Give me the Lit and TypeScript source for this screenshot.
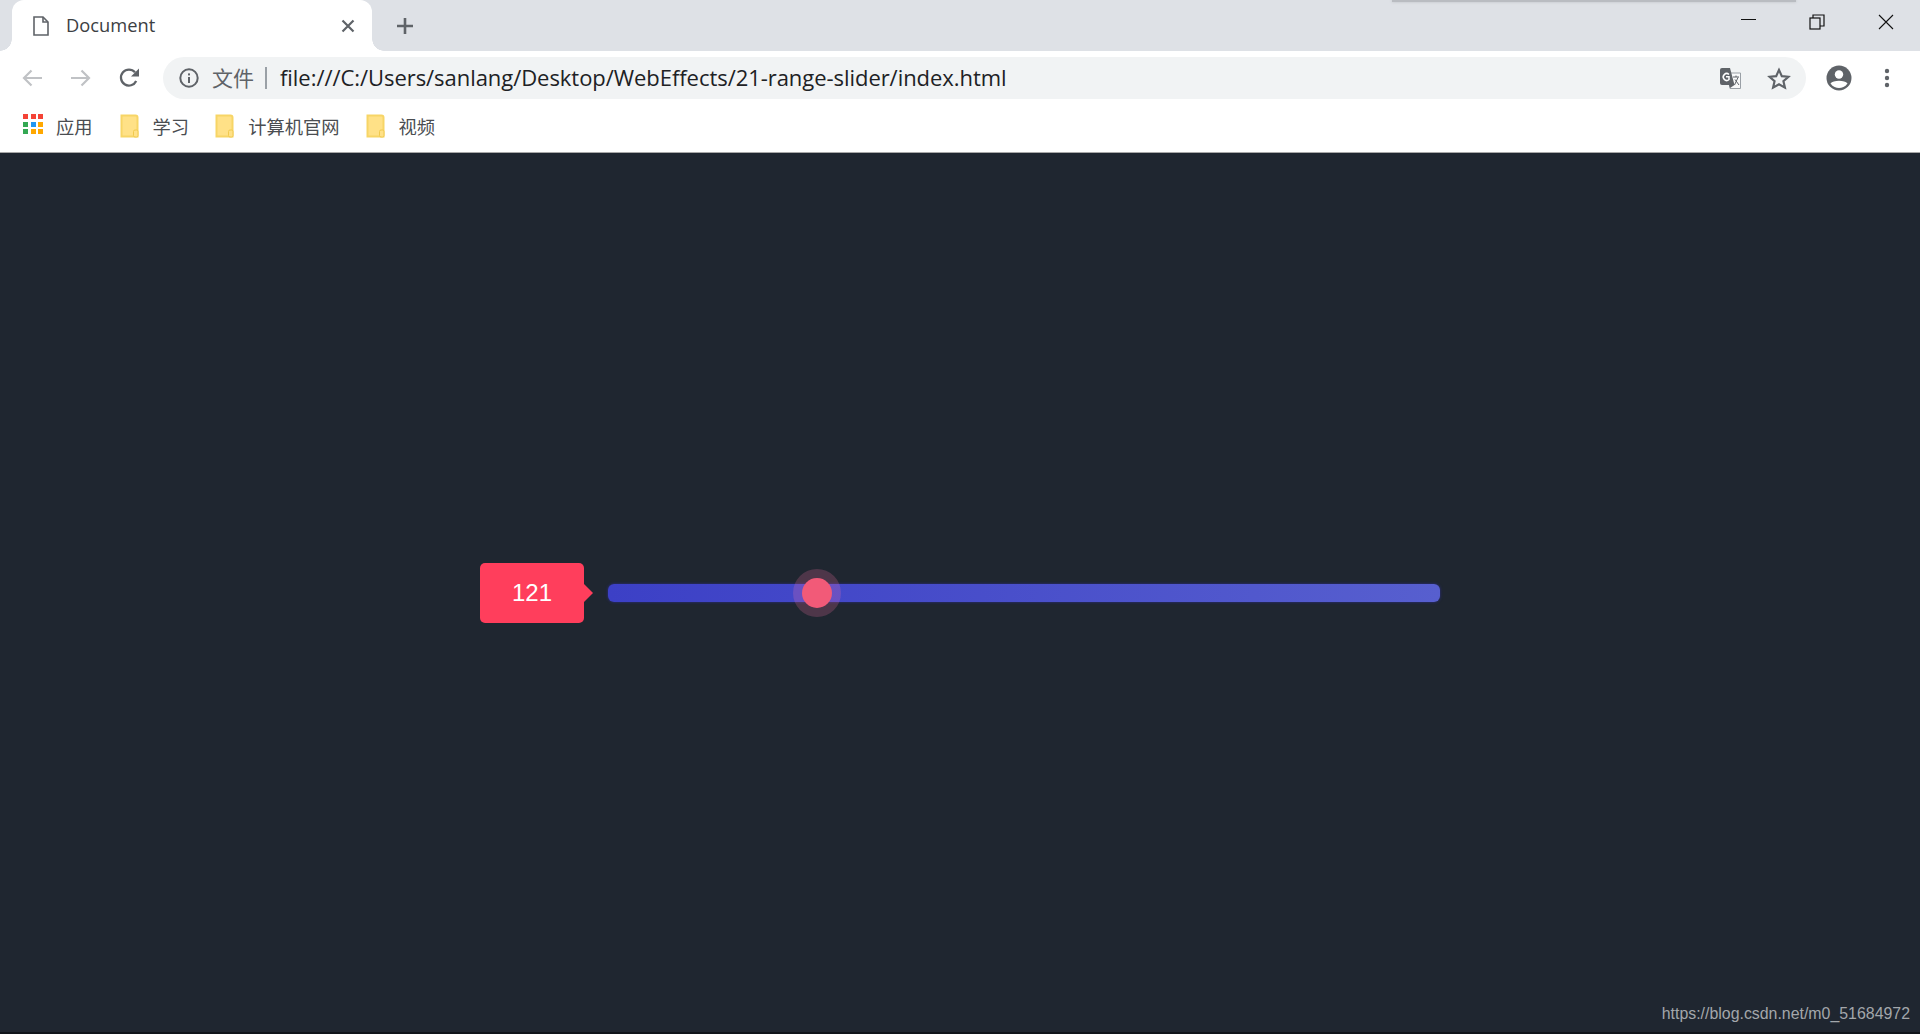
import { LitElement, html, css, svg } from "lit";
import { customElement } from "lit/decorators.js";

const folder = svg`<svg class="folder" width="19" height="24" viewBox="0 0 19 24"><path d="M1.5 1.5H15.5a2 2 0 0 1 2 2V22.5H1.5Z" fill="#ffe187" stroke="#f7d566" stroke-width="2"/><rect x="13.5" y="16" width="4.5" height="7" rx="1.5" fill="#ffe187" stroke="#f0c94e" stroke-width="1"/></svg>`;

const appColors = ["#f44336", "#f44336", "#f44336", "#34a853", "#2196f3", "#ffa800", "#34a853", "#ffa800", "#ffa800"];

@customElement("app-root")
export class AppRoot extends LitElement {
  static styles = css`
    :host {
      display: flex;
      flex-direction: column;
      height: 1034px;
      overflow: hidden;
      position: relative;
      font-family: "Noto Sans", "Noto Sans CJK SC", sans-serif;
      background: #1f2630;
    }
    .shadow-sliver {
      position: absolute;
      top: 0;
      left: 1392px;
      width: 404px;
      height: 2px;
      background: #b9bcc1;
      box-shadow: 0 0 3px #b9bcc1;
    }
    .tabstrip {
      height: 51px;
      flex: none;
      background: #dee1e6;
      display: flex;
      align-items: stretch;
      padding-left: 12px;
    }
    .tab {
      position: relative;
      width: 360px;
      background: #fff;
      border-radius: 12px 12px 0 0;
      display: flex;
      align-items: center;
      padding: 0 16px 0 21px;
      box-sizing: border-box;
      color: #3c4043;
    }
    .tab::before,
    .tab::after {
      content: "";
      position: absolute;
      bottom: 0;
      width: 12px;
      height: 12px;
    }
    .tab::before {
      left: -12px;
      background: radial-gradient(circle at 0 0, transparent 11.5px, #fff 12px);
    }
    .tab::after {
      right: -12px;
      background: radial-gradient(circle at 100% 0, transparent 11.5px, #fff 12px);
    }
    .tab .doc { margin-right: 17px; }
    .tab .title { flex: 1; line-height: 51px; font-family: "Open Sans", sans-serif; font-size: 18.3px; position: relative; top: -1px; }
    .newtab { margin-left: 22px; align-self: center; display: flex; }
    .winctl { margin-left: auto; display: flex; align-items: center; }
    .winctl svg { display: block; }
    .toolbar {
      height: 48px;
      flex: none;
      background: #fff;
      display: flex;
      align-items: flex-end;
      padding: 0 0 0 22px;
    }
    .nav { display: flex; align-items: center; height: 42px; }
    .omnibox {
      margin-left: 23px;
      width: 1643px;
      height: 42px;
      background: #f1f3f4;
      border-radius: 21px;
      display: flex;
      align-items: center;
      padding: 0 16px 0 13px;
      box-sizing: border-box;
    }
    .scheme { font-size: 21px; color: #5f6368; margin-left: 13px; font-family: "Noto Sans CJK SC", sans-serif; position: relative; top: -1px; }
    .sep { width: 2px; height: 22px; background: #9aa0a6; margin: 0 13px 0 11px; }
    .url { font-size: 22px; color: #202124; flex: 1; font-family: "Open Sans", sans-serif; white-space: nowrap; letter-spacing: -0.05px; position: relative; top: -1px; }
    .omni-right { display: flex; align-items: center; gap: 27px; }
    .tool-right { display: flex; align-items: center; height: 42px; margin-left: 20px; gap: 32px; }
    .bookmarks {
      height: 54px;
      flex: none;
      box-sizing: border-box;
      background: #fff;
      border-bottom: 1px solid #a8a8a8;
      display: flex;
      align-items: center;
      padding-left: 23px;
      font-family: "Noto Sans CJK SC", sans-serif;
      font-size: 18.3px;
      color: #4a4d51;
    }
    .bm { display: flex; align-items: center; }
    .bm span { margin-left: 13px; }
    .bm.apps { margin-right: 27px; }
    .bm.f { margin-right: 26px; }
    .bm.f span { margin-left: 14px; }
    .grid { display: grid; grid-template-columns: repeat(3, 5px); grid-auto-rows: 5px; gap: 2.5px; margin-top: -3px; }
    .grid i { display: block; }
    .stage {
      flex: 1;
      position: relative;
      display: flex;
      align-items: center;
      justify-content: center;
      gap: 24px;
      padding-bottom: 1px;
      background: #1f2630;
      font-family: "Liberation Sans", Arial, sans-serif;
    }
    .value {
      position: relative;
      width: 104px;
      height: 60px;
      background: #ff3e5c;
      border-radius: 5px;
      color: #fff;
      font-size: 24px;
      display: flex;
      align-items: center;
      justify-content: center;
    }
    .value::after {
      content: "";
      position: absolute;
      left: 100%;
      top: 50%;
      margin-top: -9px;
      border: 9px solid transparent;
      border-right-width: 0;
      border-left-color: #ff3e5c;
    }
    input[type="range"] {
      -webkit-appearance: none;
      appearance: none;
      display: block;
      width: 832px;
      height: 18px;
      margin: 0;
      border-radius: 6px;
      background: linear-gradient(90deg, #3c40c6, #575fcf);
      box-shadow: 0 0 3px #2d2f8f;
      outline: none;
    }
    input[type="range"]::-webkit-slider-thumb {
      -webkit-appearance: none;
      appearance: none;
      width: 30px;
      height: 30px;
      border-radius: 50%;
      background: #f25a78;
      box-shadow: 0 0 0 9px rgba(255, 120, 170, 0.21);
      cursor: pointer;
    }
    .watermark {
      position: absolute;
      right: 10px;
      bottom: 11px;
      font-size: 15.9px;
      color: #a3a7ab;
    }
    .edge { position: absolute; left: 0; right: 0; bottom: 0; height: 2px; background: #10151b; }
  `;

  render() {
    return html`
      <div class="shadow-sliver"></div>
      <div class="tabstrip">
        <div class="tab">
          <svg class="doc" width="16" height="20" viewBox="0 0 16 20" fill="none" stroke="#5f6368" stroke-width="1.6"><path d="M1 1H10L15 6V19H1Z"/><path d="M10 1V6H15"/></svg>
          <span class="title">Document</span>
          <svg width="14" height="14" viewBox="0 0 14 14" stroke="#5f6368" stroke-width="2.2" style="margin-right:1px"><path d="M1.5 1.5L12.5 12.5M12.5 1.5L1.5 12.5"/></svg>
        </div>
        <div class="newtab">
          <svg width="20" height="20" viewBox="0 0 20 20" stroke="#5f6368" stroke-width="2.6" style="margin-left:1px"><path d="M10 2V18M2 10H18"/></svg>
        </div>
        <div class="winctl">
          <svg width="16" height="14" viewBox="0 0 16 14" stroke="#111" stroke-width="1" style="margin:-10px 52px 0 0"><path d="M0 5.5H15"/></svg>
          <svg width="16" height="16" viewBox="0 0 16 16" fill="none" stroke="#111" stroke-width="1.2" style="margin:-8px 53px 0 0"><rect x="1" y="4" width="10" height="11" /><path d="M4 4V1H15V12H11"/></svg>
          <svg width="16" height="16" viewBox="0 0 16 16" stroke="#111" stroke-width="1.1" style="margin:-8px 26px 0 0"><path d="M1 1L15 15M15 1L1 15"/></svg>
        </div>
      </div>
      <div class="toolbar">
        <div class="nav">
          <svg width="20" height="18" viewBox="0 0 20 18" fill="none" stroke="#c0c2c5" stroke-width="2.2"><path d="M20 9H2M9.5 1.5L2 9L9.5 16.5"/></svg>
          <svg width="20" height="18" viewBox="0 0 20 18" fill="none" stroke="#c0c2c5" stroke-width="2.2" style="margin-left:29px"><path d="M0 9H18M10.5 1.5L18 9L10.5 16.5"/></svg>
          <svg width="22" height="22" viewBox="0 0 22 22" style="margin-left:27px"><path d="M18.2 14A8 8 0 1 1 17 5.3" fill="none" stroke="#5f6368" stroke-width="2.3"/><path d="M21 1.5V9.5H13Z" fill="#5f6368"/></svg>
        </div>
        <div class="omnibox">
          <svg width="20" height="20" viewBox="0 0 20 20" style="flex:none;margin-left:3px"><circle cx="10" cy="10" r="8.7" fill="none" stroke="#5f6368" stroke-width="2"/><rect x="9" y="9" width="2" height="6" fill="#5f6368"/><rect x="9" y="5.4" width="2" height="2" fill="#5f6368"/></svg>
          <span class="scheme">文件</span>
          <span class="sep"></span>
          <span class="url">file:///C:/Users/sanlang/Desktop/WebEffects/21-range-slider/index.html</span>
          <div class="omni-right">
            <svg width="22" height="22" viewBox="0 0 22 22"><path d="M9 6H21.5V21.5H11Z" fill="#f8f9fa" stroke="#9aa0a6" stroke-width="1"/><path d="M1 3A2 2 0 0 1 3 1H11L15.5 18H3A2 2 0 0 1 1 16Z" fill="#5f6368"/><path d="M11 21L15.5 18H10Z" fill="#5f6368"/><path d="M10 7.5A3.4 3.4 0 1 0 10 12.5V9.8H7" fill="none" stroke="#fff" stroke-width="1.5"/><path d="M14 10H20M17 8.5V10M15.5 18L19 10.5M16 12.5L20 18" stroke="#5f6368" stroke-width="1" fill="none"/></svg>
            <svg width="22" height="21" viewBox="0 0 22 21" fill="none" stroke="#5f6368" stroke-width="2" style="transform:scale(1.08)"><path d="M11 2.5L13.6 8.3L19.8 8.9L15.1 13L16.5 19L11 15.9L5.5 19L6.9 13L2.2 8.9L8.4 8.3Z"/></svg>
          </div>
        </div>
        <div class="tool-right">
          <svg width="26" height="26" viewBox="0 0 26 26"><circle cx="13" cy="13" r="12.5" fill="#5f6368"/><circle cx="13" cy="9.5" r="4.2" fill="#fff"/><path d="M4.5 18.5C7 14.8 19 14.8 21.5 18.5C19 22 16 23 13 23C10 23 7 22 4.5 18.5Z" fill="#fff"/></svg>
          <svg width="6" height="20" viewBox="0 0 6 20" fill="#5f6368"><circle cx="3" cy="3" r="2.2"/><circle cx="3" cy="10" r="2.2"/><circle cx="3" cy="17" r="2.2"/></svg>
        </div>
      </div>
      <div class="bookmarks">
        <div class="bm apps">
          <div class="grid">${appColors.map((c) => html`<i style="background:${c}"></i>`)}</div>
          <span>应用</span>
        </div>
        <div class="bm f">${folder}<span>学习</span></div>
        <div class="bm f">${folder}<span>计算机官网</span></div>
        <div class="bm f">${folder}<span>视频</span></div>
      </div>
      <div class="stage">
        <div class="value">121</div>
        <input type="range" min="0" max="500" .value=${"121"} />
        <div class="watermark">https://blog.csdn.net/m0_51684972</div>
        <div class="edge"></div>
      </div>
    `;
  }
}
